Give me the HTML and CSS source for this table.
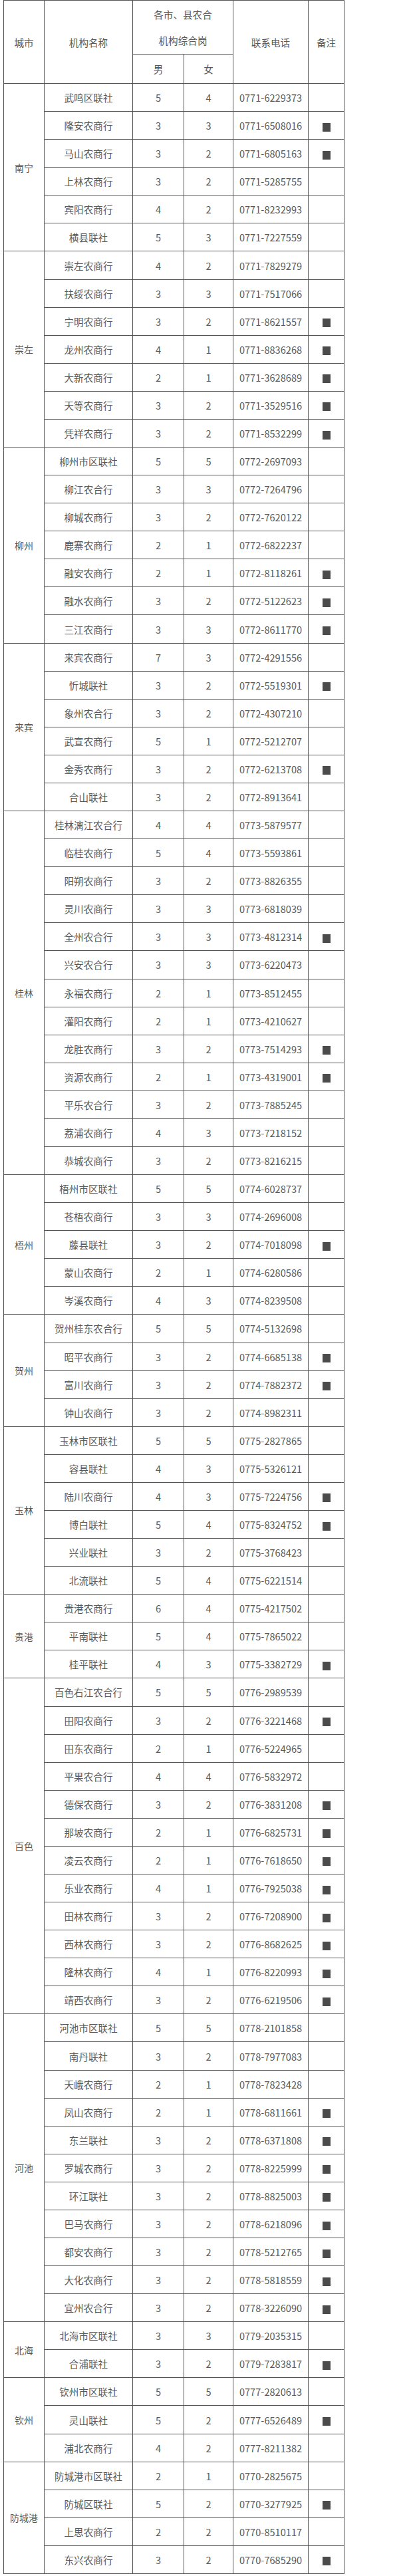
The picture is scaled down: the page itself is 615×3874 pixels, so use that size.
FILE: index.html
```html
<!DOCTYPE html>
<html lang="zh-CN">
<head>
<meta charset="utf-8">
<title>各市、县农合机构综合岗</title>
<link rel="stylesheet" href="styles.css">
</head>
<body>
<table class="grid">
  <colgroup>
    <col class="c-city"><col class="c-name"><col class="c-m"><col class="c-f"><col class="c-tel"><col class="c-note">
  </colgroup>
  <thead>
    <tr class="h1">
      <th rowspan="2">城市</th>
      <th rowspan="2">机构名称</th>
      <th colspan="2" class="two"><span>各市、县农合</span><span>机构综合岗</span></th>
      <th rowspan="2">联系电话</th>
      <th rowspan="2">备注</th>
    </tr>
    <tr class="h2"><th>男</th><th>女</th></tr>
  </thead>
  <tbody>
    <tr><td rowspan="6" class="city">南宁</td><td>武鸣区联社</td><td>5</td><td>4</td><td>0771-6229373</td><td></td></tr>
    <tr><td>隆安农商行</td><td>3</td><td>3</td><td>0771-6508016</td><td><i class="mk"></i></td></tr>
    <tr><td>马山农商行</td><td>3</td><td>2</td><td>0771-6805163</td><td><i class="mk"></i></td></tr>
    <tr><td>上林农商行</td><td>3</td><td>2</td><td>0771-5285755</td><td></td></tr>
    <tr><td>宾阳农商行</td><td>4</td><td>2</td><td>0771-8232993</td><td></td></tr>
    <tr><td>横县联社</td><td>5</td><td>3</td><td>0771-7227559</td><td></td></tr>

    <tr><td rowspan="7" class="city">崇左</td><td>崇左农商行</td><td>4</td><td>2</td><td>0771-7829279</td><td></td></tr>
    <tr><td>扶绥农商行</td><td>3</td><td>3</td><td>0771-7517066</td><td></td></tr>
    <tr><td>宁明农商行</td><td>3</td><td>2</td><td>0771-8621557</td><td><i class="mk"></i></td></tr>
    <tr><td>龙州农商行</td><td>4</td><td>1</td><td>0771-8836268</td><td><i class="mk"></i></td></tr>
    <tr><td>大新农商行</td><td>2</td><td>1</td><td>0771-3628689</td><td><i class="mk"></i></td></tr>
    <tr><td>天等农商行</td><td>3</td><td>2</td><td>0771-3529516</td><td><i class="mk"></i></td></tr>
    <tr><td>凭祥农商行</td><td>3</td><td>2</td><td>0771-8532299</td><td><i class="mk"></i></td></tr>

    <tr><td rowspan="7" class="city">柳州</td><td>柳州市区联社</td><td>5</td><td>5</td><td>0772-2697093</td><td></td></tr>
    <tr><td>柳江农合行</td><td>3</td><td>3</td><td>0772-7264796</td><td></td></tr>
    <tr><td>柳城农商行</td><td>3</td><td>2</td><td>0772-7620122</td><td></td></tr>
    <tr><td>鹿寨农商行</td><td>2</td><td>1</td><td>0772-6822237</td><td></td></tr>
    <tr><td>融安农商行</td><td>2</td><td>1</td><td>0772-8118261</td><td><i class="mk"></i></td></tr>
    <tr><td>融水农商行</td><td>3</td><td>2</td><td>0772-5122623</td><td><i class="mk"></i></td></tr>
    <tr><td>三江农商行</td><td>3</td><td>3</td><td>0772-8611770</td><td><i class="mk"></i></td></tr>

    <tr><td rowspan="6" class="city">来宾</td><td>来宾农商行</td><td>7</td><td>3</td><td>0772-4291556</td><td></td></tr>
    <tr><td>忻城联社</td><td>3</td><td>2</td><td>0772-5519301</td><td><i class="mk"></i></td></tr>
    <tr><td>象州农合行</td><td>3</td><td>2</td><td>0772-4307210</td><td></td></tr>
    <tr><td>武宣农商行</td><td>5</td><td>1</td><td>0772-5212707</td><td></td></tr>
    <tr><td>金秀农商行</td><td>3</td><td>2</td><td>0772-6213708</td><td><i class="mk"></i></td></tr>
    <tr><td>合山联社</td><td>3</td><td>2</td><td>0772-8913641</td><td></td></tr>

    <tr><td rowspan="13" class="city">桂林</td><td>桂林漓江农合行</td><td>4</td><td>4</td><td>0773-5879577</td><td></td></tr>
    <tr><td>临桂农商行</td><td>5</td><td>4</td><td>0773-5593861</td><td></td></tr>
    <tr><td>阳朔农商行</td><td>3</td><td>2</td><td>0773-8826355</td><td></td></tr>
    <tr><td>灵川农商行</td><td>3</td><td>3</td><td>0773-6818039</td><td></td></tr>
    <tr><td>全州农合行</td><td>3</td><td>3</td><td>0773-4812314</td><td><i class="mk"></i></td></tr>
    <tr><td>兴安农合行</td><td>3</td><td>3</td><td>0773-6220473</td><td></td></tr>
    <tr><td>永福农商行</td><td>2</td><td>1</td><td>0773-8512455</td><td></td></tr>
    <tr><td>灌阳农商行</td><td>2</td><td>1</td><td>0773-4210627</td><td></td></tr>
    <tr><td>龙胜农商行</td><td>3</td><td>2</td><td>0773-7514293</td><td><i class="mk"></i></td></tr>
    <tr><td>资源农商行</td><td>2</td><td>1</td><td>0773-4319001</td><td><i class="mk"></i></td></tr>
    <tr><td>平乐农合行</td><td>3</td><td>2</td><td>0773-7885245</td><td></td></tr>
    <tr><td>荔浦农商行</td><td>4</td><td>3</td><td>0773-7218152</td><td></td></tr>
    <tr><td>恭城农商行</td><td>3</td><td>2</td><td>0773-8216215</td><td></td></tr>

    <tr><td rowspan="5" class="city">梧州</td><td>梧州市区联社</td><td>5</td><td>5</td><td>0774-6028737</td><td></td></tr>
    <tr><td>苍梧农商行</td><td>3</td><td>3</td><td>0774-2696008</td><td></td></tr>
    <tr><td>藤县联社</td><td>3</td><td>2</td><td>0774-7018098</td><td><i class="mk"></i></td></tr>
    <tr><td>蒙山农商行</td><td>2</td><td>1</td><td>0774-6280586</td><td></td></tr>
    <tr><td>岑溪农商行</td><td>4</td><td>3</td><td>0774-8239508</td><td></td></tr>

    <tr><td rowspan="4" class="city">贺州</td><td>贺州桂东农合行</td><td>5</td><td>5</td><td>0774-5132698</td><td></td></tr>
    <tr><td>昭平农商行</td><td>3</td><td>2</td><td>0774-6685138</td><td><i class="mk"></i></td></tr>
    <tr><td>富川农商行</td><td>3</td><td>2</td><td>0774-7882372</td><td><i class="mk"></i></td></tr>
    <tr><td>钟山农商行</td><td>3</td><td>2</td><td>0774-8982311</td><td></td></tr>

    <tr><td rowspan="6" class="city">玉林</td><td>玉林市区联社</td><td>5</td><td>5</td><td>0775-2827865</td><td></td></tr>
    <tr><td>容县联社</td><td>4</td><td>3</td><td>0775-5326121</td><td></td></tr>
    <tr><td>陆川农商行</td><td>4</td><td>3</td><td>0775-7224756</td><td><i class="mk"></i></td></tr>
    <tr><td>博白联社</td><td>5</td><td>4</td><td>0775-8324752</td><td><i class="mk"></i></td></tr>
    <tr><td>兴业联社</td><td>3</td><td>2</td><td>0775-3768423</td><td></td></tr>
    <tr><td>北流联社</td><td>5</td><td>4</td><td>0775-6221514</td><td></td></tr>

    <tr><td rowspan="3" class="city">贵港</td><td>贵港农商行</td><td>6</td><td>4</td><td>0775-4217502</td><td></td></tr>
    <tr><td>平南联社</td><td>5</td><td>4</td><td>0775-7865022</td><td></td></tr>
    <tr><td>桂平联社</td><td>4</td><td>3</td><td>0775-3382729</td><td><i class="mk"></i></td></tr>

    <tr><td rowspan="12" class="city">百色</td><td>百色右江农合行</td><td>5</td><td>5</td><td>0776-2989539</td><td></td></tr>
    <tr><td>田阳农商行</td><td>3</td><td>2</td><td>0776-3221468</td><td><i class="mk"></i></td></tr>
    <tr><td>田东农商行</td><td>2</td><td>1</td><td>0776-5224965</td><td></td></tr>
    <tr><td>平果农合行</td><td>4</td><td>4</td><td>0776-5832972</td><td></td></tr>
    <tr><td>德保农商行</td><td>3</td><td>2</td><td>0776-3831208</td><td><i class="mk"></i></td></tr>
    <tr><td>那坡农商行</td><td>2</td><td>1</td><td>0776-6825731</td><td><i class="mk"></i></td></tr>
    <tr><td>凌云农商行</td><td>2</td><td>1</td><td>0776-7618650</td><td><i class="mk"></i></td></tr>
    <tr><td>乐业农商行</td><td>4</td><td>1</td><td>0776-7925038</td><td><i class="mk"></i></td></tr>
    <tr><td>田林农商行</td><td>3</td><td>2</td><td>0776-7208900</td><td><i class="mk"></i></td></tr>
    <tr><td>西林农商行</td><td>3</td><td>2</td><td>0776-8682625</td><td><i class="mk"></i></td></tr>
    <tr><td>隆林农商行</td><td>4</td><td>1</td><td>0776-8220993</td><td><i class="mk"></i></td></tr>
    <tr><td>靖西农商行</td><td>3</td><td>2</td><td>0776-6219506</td><td><i class="mk"></i></td></tr>

    <tr><td rowspan="11" class="city">河池</td><td>河池市区联社</td><td>5</td><td>5</td><td>0778-2101858</td><td></td></tr>
    <tr><td>南丹联社</td><td>3</td><td>2</td><td>0778-7977083</td><td></td></tr>
    <tr><td>天峨农商行</td><td>2</td><td>1</td><td>0778-7823428</td><td></td></tr>
    <tr><td>凤山农商行</td><td>2</td><td>1</td><td>0778-6811661</td><td><i class="mk"></i></td></tr>
    <tr><td>东兰联社</td><td>3</td><td>2</td><td>0778-6371808</td><td><i class="mk"></i></td></tr>
    <tr><td>罗城农商行</td><td>3</td><td>2</td><td>0778-8225999</td><td><i class="mk"></i></td></tr>
    <tr><td>环江联社</td><td>3</td><td>2</td><td>0778-8825003</td><td><i class="mk"></i></td></tr>
    <tr><td>巴马农商行</td><td>3</td><td>2</td><td>0778-6218096</td><td><i class="mk"></i></td></tr>
    <tr><td>都安农商行</td><td>3</td><td>2</td><td>0778-5212765</td><td><i class="mk"></i></td></tr>
    <tr><td>大化农商行</td><td>3</td><td>2</td><td>0778-5818559</td><td><i class="mk"></i></td></tr>
    <tr><td>宜州农合行</td><td>3</td><td>2</td><td>0778-3226090</td><td><i class="mk"></i></td></tr>

    <tr><td rowspan="2" class="city">北海</td><td>北海市区联社</td><td>3</td><td>3</td><td>0779-2035315</td><td></td></tr>
    <tr><td>合浦联社</td><td>3</td><td>2</td><td>0779-7283817</td><td><i class="mk"></i></td></tr>

    <tr><td rowspan="3" class="city">钦州</td><td>钦州市区联社</td><td>5</td><td>5</td><td>0777-2820613</td><td></td></tr>
    <tr><td>灵山联社</td><td>5</td><td>2</td><td>0777-6526489</td><td><i class="mk"></i></td></tr>
    <tr><td>浦北农商行</td><td>4</td><td>2</td><td>0777-8211382</td><td></td></tr>

    <tr><td rowspan="4" class="city">防城港</td><td>防城港市区联社</td><td>2</td><td>1</td><td>0770-2825675</td><td></td></tr>
    <tr><td>防城区联社</td><td>5</td><td>2</td><td>0770-3277925</td><td><i class="mk"></i></td></tr>
    <tr><td>上思农商行</td><td>2</td><td>2</td><td>0770-8510117</td><td></td></tr>
    <tr><td>东兴农商行</td><td>3</td><td>2</td><td>0770-7685290</td><td><i class="mk"></i></td></tr>
  </tbody>
</table>
</body>
</html>
```

FILE: styles.css
```css
html, body {
  margin: 0;
  padding: 0;
  background: #ffffff;
}

body {
  font-family: "Noto Sans CJK SC", "Noto Sans", sans-serif;
  color: #595959;
}

.grid {
  margin: 0 0 0 5px;
  width: 513px;
  border-collapse: collapse;
  table-layout: fixed;
  font-size: 14.6px;
}

.c-city { width: 61px; }
.c-name { width: 133px; }
.c-m { width: 77px; }
.c-f { width: 74px; }
.c-tel { width: 113px; }
.c-note { width: 54px; }

.grid th,
.grid td {
  border: 1px solid #555555;
  padding: 0;
  text-align: center;
  vertical-align: middle;
  font-weight: 400;
  box-sizing: border-box;
  white-space: nowrap;
}

.grid td {
  height: 42.09px;
}

.grid .h1 th { height: 81px; }
.grid .h2 th { height: 44px; }

.grid .two span {
  display: block;
  line-height: 39px;
}

.grid .city {
  font-size: 14px;
}

.mk {
  display: inline-block;
  width: 12px;
  height: 13px;
  background: #4b4b4b;
  vertical-align: middle;
}
```
